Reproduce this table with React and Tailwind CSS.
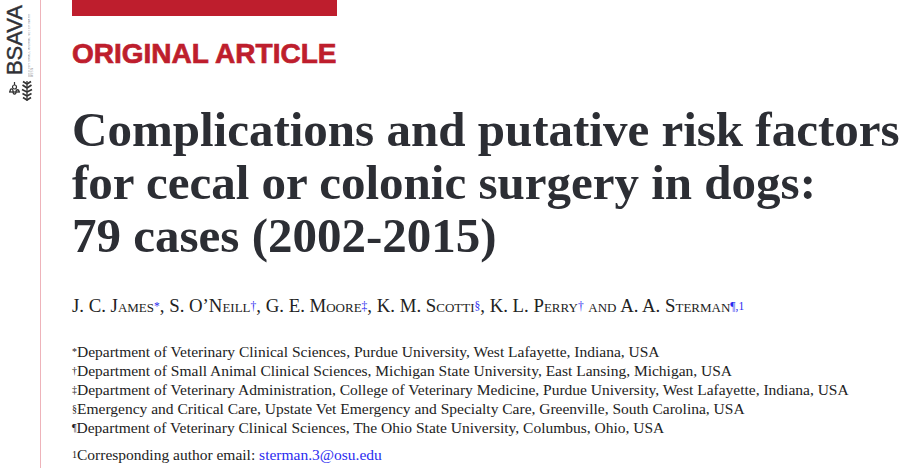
import React from 'react';

const serif = { fontFamily: '"Liberation Serif", "Times New Roman", serif' };

function Sup({ children, blue }) {
  return (
    <sup
      className={`relative -top-[2px] ${blue ? 'text-[11.5px] text-[#2b2bf0]' : 'text-[10px]'}`}
      style={{ fontVariant: 'normal' }}
    >
      {children}
    </sup>
  );
}

function Logo() {
  return (
    <div className="flex flex-col items-center pt-[5px]">
      <div className="flex items-start h-[74px]">
        <span
          className="rotate-180 [writing-mode:vertical-rl] text-[22px] leading-[17px] text-[#2f3036] [-webkit-text-stroke:0.4px_#2f3036]"
          style={{ fontFamily: '"Liberation Sans", Arial, sans-serif' }}
        >
          BSAVA
        </span>
        <span
          className="rotate-180 [writing-mode:vertical-rl] h-[72px] overflow-hidden text-[3px] leading-[3px] ml-[5px] text-[#9a9a9a] tracking-[0.3px]"
          style={{ fontFamily: '"Liberation Sans", Arial, sans-serif' }}
        >
          BRITISH SMALL ANIMAL VETERINARY ASSN
        </span>
      </div>
      <svg width="26" height="24" viewBox="0 0 26 24" className="ml-[1px]">
        {/* serpent on staff */}
        <path d="M1 13 H12" stroke="#333" strokeWidth="1.3" fill="none" />
        <path d="M2 13 C2 9 5 9 5 12 C5 16 8 16 8 13 C8 10 11 10 11 13" stroke="#333" strokeWidth="1.3" fill="none" />
        <circle cx="6.5" cy="8" r="2" fill="none" stroke="#333" strokeWidth="1.2" />
        <path d="M6.5 6 V3" stroke="#333" strokeWidth="1.2" />
        {/* sprig */}
        <path d="M19 2 V22" stroke="#333" strokeWidth="1.3" fill="none" />
        <path
          d="M19 5 L15 2.5 M19 5 L23 2.5 M19 9 L14.5 6 M19 9 L23.5 6 M19 13 L14 10.5 M19 13 L24 10.5 M19 17 L14.5 14.5 M19 17 L23.5 14.5 M19 21 L15 18.5 M19 21 L23 18.5"
          stroke="#333"
          strokeWidth="1.7"
          fill="none"
        />
      </svg>
    </div>
  );
}

export default function App() {
  return (
    <div className="w-[916px] h-[468px] bg-white flex overflow-hidden">
      <div className="w-[41px] shrink-0 border-r border-[#eeb3ba] h-full">
        <Logo />
      </div>

      <div className="pl-[31px] flex flex-col">
        <div className="w-[265px] h-[16px] bg-[#be1e2d]" />

        <h2
          className="mt-[23px] text-[28px] leading-[30px] font-bold text-[#be1e2d] [-webkit-text-stroke:0.7px_#be1e2d]"
          style={{ fontFamily: '"Liberation Sans", Arial, sans-serif' }}
        >
          ORIGINAL ARTICLE
        </h2>

        <h1 className="mt-[34px] text-[49px] leading-[53px] font-bold text-[#2c2e34] whitespace-nowrap" style={serif}>
          Complications and putative risk factors
          <br />
          for cecal or colonic surgery in dogs:
          <br />
          79 cases (2002-2015)
        </h1>

        <p className="mt-[34px] text-[18.8px] leading-[20px] text-[#222] whitespace-nowrap" style={{ ...serif, fontVariant: 'small-caps' }}>
          J. C. James<Sup blue>*</Sup>, S. O’Neill<Sup blue>†</Sup>, G. E. Moore<Sup blue>‡</Sup>, K. M. Scotti<Sup blue>§</Sup>, K. L. Perry<Sup blue>†</Sup> and A. A. Sterman<Sup blue>¶,1</Sup>
        </p>

        <div className="mt-[26px] text-[15.5px] leading-[19px] text-[#222] whitespace-nowrap" style={serif}>
          <p><Sup>*</Sup>Department of Veterinary Clinical Sciences, Purdue University, West Lafayette, Indiana, USA</p>
          <p><Sup>†</Sup>Department of Small Animal Clinical Sciences, Michigan State University, East Lansing, Michigan, USA</p>
          <p><Sup>‡</Sup>Department of Veterinary Administration, College of Veterinary Medicine, Purdue University, West Lafayette, Indiana, USA</p>
          <p><Sup>§</Sup>Emergency and Critical Care, Upstate Vet Emergency and Specialty Care, Greenville, South Carolina, USA</p>
          <p><Sup>¶</Sup>Department of Veterinary Clinical Sciences, The Ohio State University, Columbus, Ohio, USA</p>
          <p className="mt-[8px]">
            <Sup>1</Sup>Corresponding author email: <span className="text-[#2b2bf0]">sterman.3@osu.edu</span>
          </p>
        </div>
      </div>
    </div>
  );
}
